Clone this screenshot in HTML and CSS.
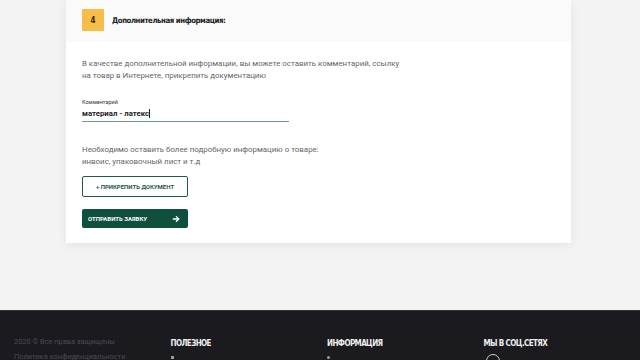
FILE: index.html
```html
<!DOCTYPE html>
<html lang="ru">
<head>
    <meta charset="UTF-8">
    <meta name="viewport" content="width=device-width, initial-scale=1.0">
    <title>Заявка - Дополнительная информация</title>
    <link rel="stylesheet" href="styles.css">
</head>
<body>
    <main class="page">
        <section class="card">
            <div class="step-head">
                <span class="step-num">4</span>
                <h2 class="step-title">Дополнительная информация:</h2>
            </div>

            <div class="step-body">
                <p class="hint">В качестве дополнительной информации, вы можете оставить комментарий, ссылку<br>на товар в Интернете, прикрепить документацию</p>

                <div class="field">
                    <label for="comment">Комментарий</label>
                    <div class="field-input">
                        <span id="comment">материал - латекс</span><span class="caret"></span>
                    </div>
                </div>

                <p class="hint hint-docs">Необходимо оставить более подробную информацию о товаре:<br>инвоис, упаковочный лист и т.д</p>

                <button type="button" class="btn btn-outline">+ Прикрепить документ</button>
                <button type="submit" class="btn btn-primary">
                    <span>Отправить заявку</span>
                    <svg class="btn-arrow" viewBox="0 0 10 10" fill="none">
                        <path d="M1 5h7.5M5 1.5L8.5 5 5 8.5" stroke="#fff" stroke-width="1.6"/>
                    </svg>
                </button>
            </div>
        </section>
    </main>

    <footer class="footer">
        <div class="footer-col">
            <p class="copy">2020 © Все права защищены</p>
            <a class="policy" href="#">Политика конфиденциальности</a>
        </div>
        <div class="footer-col">
            <h3 class="footer-title">Полезное</h3>
            <span class="footer-mark"></span>
        </div>
        <div class="footer-col">
            <h3 class="footer-title">Информация</h3>
            <span class="footer-mark dot"></span>
        </div>
        <div class="footer-col">
            <h3 class="footer-title">Мы в соц.сетях</h3>
            <span class="social"></span>
        </div>
    </footer>
</body>
</html>
```

FILE: styles.css
```css
body {
    margin: 0;
    background: #f3f3f3;
    font-family: Roboto, "Liberation Sans", sans-serif;
    color: #333;
}

.page {
    height: 310px;
}

.card {
    width: 505px;
    margin-left: 66px;
    height: 243px;
    background: #fff;
    box-shadow: 0 2px 10px rgba(0, 0, 0, 0.07);
}

.step-head {
    display: flex;
    align-items: center;
    height: 42px;
    padding-left: 16px;
    background: #fafafa;
}

.step-num {
    display: flex;
    align-items: center;
    justify-content: center;
    width: 22px;
    height: 22px;
    margin-top: -2px;
    background: #f6bd4b;
    color: #3a2a00;
    font-family: "DejaVu Sans Condensed", "DejaVu Sans", sans-serif;
    font-weight: bold;
    font-size: 8px;
}

.step-title {
    margin: -2px 0 0 8px;
    font-family: "DejaVu Sans Condensed", "DejaVu Sans", sans-serif;
    font-weight: bold;
    font-size: 7.8px;
    letter-spacing: -0.45px;
    color: #222;
}

.step-body {
    padding: 16px 16px 0;
}

.hint {
    margin: 0;
    font-size: 7.9px;
    line-height: 12px;
    color: #666;
}

.field {
    margin-top: 17px;
    width: 207px;
}

.field label {
    display: block;
    font-size: 5.5px;
    color: #333;
}

.field-input {
    display: flex;
    align-items: center;
    height: 16px;
    border-bottom: 1px solid #5fa18c;
    font-size: 7.8px;
    font-weight: bold;
    color: #222;
}

.caret {
    width: 1px;
    height: 9px;
    background: #222;
}

.hint-docs {
    margin-top: 22px;
}

.btn {
    display: flex;
    align-items: center;
    width: 106px;
    border-radius: 2px;
    font-family: Roboto, "Liberation Sans", sans-serif;
    font-weight: bold;
    font-size: 6px;
    text-transform: uppercase;
    cursor: pointer;
}

.btn-outline {
    justify-content: center;
    height: 21px;
    margin-top: 8px;
    background: #fff;
    border: 1px solid #1f5a49;
    color: #1f5a49;
}

.btn-primary {
    justify-content: space-between;
    height: 19px;
    margin-top: 12px;
    padding: 0 8px 0 6px;
    background: #0f4f3e;
    border: none;
    color: #fff;
}

.btn-arrow {
    width: 8px;
    height: 8px;
}

.footer {
    display: grid;
    grid-template-columns: repeat(4, 156.5px);
    height: 50px;
    padding: 26px 0 0 14px;
    box-sizing: border-box;
    background: #1b1a1f;
    border-top: 1px solid #333;
    overflow: hidden;
}

.copy {
    margin: 0;
    font-size: 7.4px;
    color: #4c4b52;
}

.policy {
    display: block;
    margin-top: 6px;
    font-size: 7.4px;
    color: #4c4b52;
}

.footer-title {
    margin: 2px 0 0;
    font-family: "DejaVu Sans Condensed", "DejaVu Sans", sans-serif;
    font-weight: bold;
    font-size: 8px;
    letter-spacing: -0.6px;
    color: #eee;
    text-transform: uppercase;
}

.footer-mark {
    display: block;
    width: 3px;
    height: 3px;
    margin-top: 8px;
    background: #999;
}

.footer-mark.dot {
    border-radius: 50%;
}

.social {
    display: block;
    width: 12px;
    height: 12px;
    margin: 6px 0 0 2px;
    border: 1px solid #ccc;
    border-radius: 50%;
}
```
